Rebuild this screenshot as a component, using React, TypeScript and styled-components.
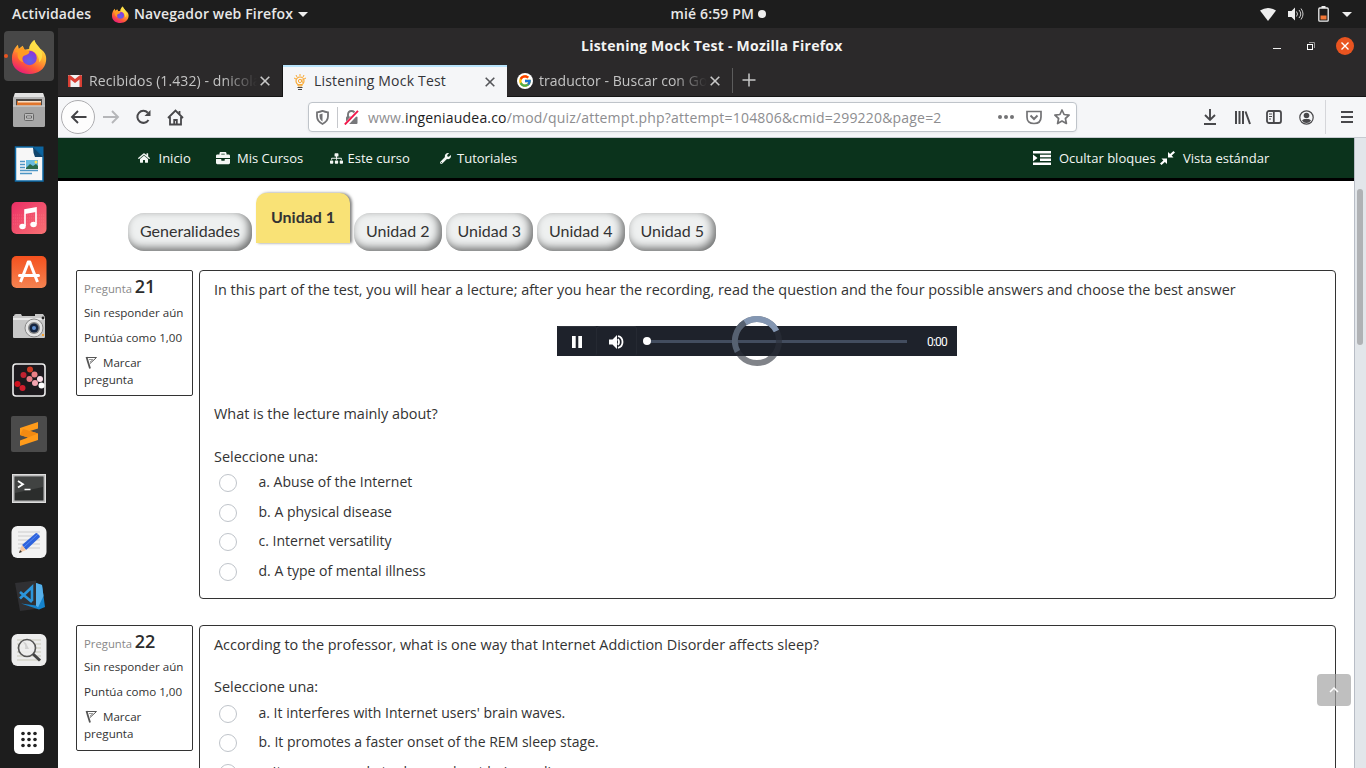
import React from "react";
import styled, { createGlobalStyle } from "styled-components";
import { FaHome, FaBriefcase, FaSitemap, FaWrench } from "react-icons/fa";
import { FcGoogle } from "react-icons/fc";

const GlobalStyle = createGlobalStyle`
  * { box-sizing: border-box; }
  body { margin: 0; overflow: hidden; background: #1d1d1d; }
  svg { display: block; flex: none; }
`;

const ui = `"Open Sans", "Noto Sans", sans-serif`;

const Desktop = styled.div`
  width: 1366px;
  height: 768px;
  display: flex;
  flex-direction: column;
  overflow: hidden;
  background: #1d1d1d;
  font-family: ${ui};
`;

const Label = styled.span<{ $w?: number; $ls?: number; $bold?: number; $size?: number; $color?: string; $ml?: number; $up?: number }>`
  display: block;
  flex: none;
  width: ${(p) => (p.$w ? p.$w + "px" : "auto")};
  letter-spacing: ${(p) => p.$ls ?? 0}px;
  font-weight: ${(p) => p.$bold ?? 400};
  font-size: ${(p) => p.$size ?? 14}px;
  color: ${(p) => p.$color ?? "inherit"};
  margin-left: ${(p) => p.$ml ?? 0}px;
  padding-bottom: ${(p) => p.$up ?? 0}px;
  white-space: nowrap;
`;

/* ---------- system bar ---------- */
const SystemBar = styled.header`
  height: 28px;
  flex: none;
  display: grid;
  grid-template-columns: 1fr auto 1fr;
  align-items: center;
  padding: 0 14px 0 12px;
  color: #e8e8e8;
  line-height: 26px;
`;
const BarSide = styled.div<{ $end?: boolean }>`
  display: flex;
  align-items: center;
  height: 26px;
  justify-content: ${(p) => (p.$end ? "flex-end" : "flex-start")};
`;
const Clock = styled.div`
  display: flex;
  align-items: center;
  height: 26px;
  padding-left: 72px;
`;
const Dot = styled.i`
  width: 8px;
  height: 8px;
  margin-left: 3px;
  border-radius: 50%;
  background: #eee;
`;
const Spacer = styled.div<{ $w?: number }>`
  width: ${(p) => (p.$w ? p.$w + "px" : "auto")};
  flex: ${(p) => (p.$w ? "none" : "1")};
`;

/* ---------- dock ---------- */
const Workspace = styled.div`
  flex: 1;
  min-height: 0;
  display: flex;
`;
const Dock = styled.aside`
  width: 58px;
  flex: none;
  display: flex;
  flex-direction: column;
  padding: 1px 0 14px;
`;
const DockSlot = styled.div`
  height: 54px;
  width: 58px;
  display: flex;
  align-items: center;
  justify-content: center;
`;
const ActiveTile = styled.div`
  width: 50px;
  height: 50px;
  border-radius: 4px;
  background: #474747;
  display: flex;
  align-items: center;
  justify-content: center;
`;
const RunDot = styled.i`
  position: absolute;
  left: 4px;
  top: 54px;
  width: 4px;
  height: 4px;
  border-radius: 50%;
  background: #e95420;
`;
const DockBottom = styled.div`
  margin-top: auto;
  display: flex;
  justify-content: center;
`;

/* ---------- browser ---------- */
const Browser = styled.main`
  flex: 1;
  min-width: 0;
  display: flex;
  flex-direction: column;
  background: #2b292a;
`;
const TitleBar = styled.div`
  height: 36px;
  flex: none;
  display: flex;
  align-items: center;
  padding: 0 12px 0 523px;
  color: #f3f3f3;
`;
const TabStrip = styled.div`
  height: 33px;
  flex: none;
  display: flex;
  padding-top: 1px;
  border-bottom: 1px solid #151515;
  color: #c9c9c9;
`;
const Tab = styled.div<{ $active?: boolean; $w: number; $pad: number }>`
  width: ${(p) => p.$w}px;
  height: ${(p) => (p.$active ? 32 : 31)}px;
  padding: 0 12px 1px ${(p) => p.$pad}px;
  display: flex;
  align-items: center;
  flex: none;
  color: ${(p) => (p.$active ? "#333438" : "#c4c4c4")};
  background: ${(p) => (p.$active ? "#f5f6f8" : "transparent")};
  border-top: 2px solid ${(p) => (p.$active ? "#b8e4fc" : "transparent")};
`;
const Fade = styled.div<{ $w: number; $ml: number }>`
  width: ${(p) => p.$w}px;
  margin-left: ${(p) => p.$ml}px;
  overflow: hidden;
  flex: none;
  mask-image: linear-gradient(to right, #000 calc(100% - 34px), transparent 100%);
`;
const Toolbar = styled.div`
  height: 41px;
  flex: none;
  display: flex;
  align-items: center;
  background: #f5f6f8;
  border-bottom: 1px solid #c6cad0;
  padding-left: 3px;
`;
const BackButton = styled.div`
  width: 34px;
  height: 34px;
  border: 1px solid #adadb0;
  border-radius: 50%;
  background: #fdfdfd;
  display: flex;
  align-items: center;
  justify-content: center;
`;
const AddressBar = styled.div`
  width: 769px;
  height: 30px;
  margin-left: 124px;
  flex: none;
  display: flex;
  align-items: center;
  background: #fff;
  border: 1px solid #bfc4ca;
  border-radius: 4px;
  padding: 0 6px 0 5px;
  box-shadow: 0 1px 3px rgba(0, 0, 0, 0.06);
  color: #8d8d90;
  b { color: #1c1c1e; font-weight: 400; }
`;
const Rule = styled.i<{ $h: number; $c: string }>`
  width: 1px;
  height: ${(p) => p.$h}px;
  background: ${(p) => p.$c};
  flex: none;
`;

/* ---------- page ---------- */
const Viewport = styled.div`
  flex: 1;
  min-height: 0;
  display: flex;
`;
const Page = styled.div`
  flex: 1;
  min-width: 0;
  background: #fff;
  overflow: hidden;
`;
const Scrollbar = styled.div`
  width: 12px;
  flex: none;
  background: #e2e6ea;
  border-left: 1px solid #b8bdc6;
  padding: 51px 0 0 2px;
`;
const Thumb = styled.div`
  width: 6px;
  height: 156px;
  border-radius: 3px;
  background: #b0b2b5;
`;
const SiteNav = styled.nav`
  height: 43px;
  display: flex;
  align-items: center;
  padding: 0 85px 0 80px;
  background: #0b331c;
  border-bottom: 3px solid #000;
  color: #f4f7f4;
`;
const UnitTabs = styled.div`
  display: flex;
  align-items: flex-end;
  height: 70px;
  padding-left: 70px;
  gap: 4px;
  font-family: Lato, sans-serif;
`;
const UnitTab = styled.div<{ $w: number }>`
  width: ${(p) => p.$w}px;
  height: 38px;
  border-radius: 16px;
  background: #eef0f0;
  box-shadow: inset -3px -3px 8px rgba(0, 0, 0, 0.55);
  color: #333;
  font-size: 16px;
  line-height: 36px;
  text-align: center;
  white-space: nowrap;
`;
const CurrentUnit = styled.div`
  width: 94px;
  height: 50px;
  margin-bottom: 8px;
  border-radius: 10px 10px 0 0;
  background: #f9e276;
  box-shadow: 2px 0 3px rgba(0, 0, 0, 0.5);
  color: #333;
  font-size: 16px;
  font-weight: 700;
  line-height: 48px;
  text-align: center;
`;
const Questions = styled.div`
  display: flex;
  flex-direction: column;
  gap: 26px;
  padding: 19px 18px 0 18px;
  color: #333;
`;
const Question = styled.section`
  display: flex;
  align-items: flex-start;
  gap: 6px;
`;
const Info = styled.div`
  width: 117px;
  height: 126px;
  border: 1px solid #333;
  border-radius: 2px;
  padding: 4px 7px 0;
  font-size: 11.6px;
  line-height: 17px;
  white-space: nowrap;
`;
const InfoTitle = styled.div`
  height: 20.6px;
  line-height: 22px;
  color: #888;
  font-size: 11.3px;
  b { color: #2c2c2c; font-size: 18px; font-weight: 600; margin-left: -0.3px; }
`;
const InfoLine = styled.div`
  margin-top: 8px;
`;
const FlagLine = styled.div`
  display: flex;
  align-items: center;
  gap: 6px;
  margin-top: 8px;
`;
const Body = styled.div<{ $h: number }>`
  width: 1137px;
  height: ${(p) => p.$h}px;
  border: 1px solid #333;
  border-radius: 4px;
  padding: 9px 14px 0;
  font-size: 14.43px;
  line-height: 20px;
`;
const Prompt = styled.div<{ $mt?: number }>`
  margin-top: ${(p) => p.$mt ?? 0}px;
  white-space: nowrap;
`;
const Choices = styled.div<{ $pt: number }>`
  padding-top: ${(p) => p.$pt}px;
  font-size: 14.03px;
`;
const Choice = styled.label`
  display: flex;
  align-items: center;
  height: 29.6px;
  padding: 0 0 0 5px;
  gap: 21.5px;
  span { margin-top: -2px; }
`;
const Radio = styled.i`
  width: 18px;
  height: 18px;
  border: 1px solid #bfc4ca;
  border-radius: 50%;
  background: #fff;
`;
const Player = styled.div`
  position: relative;
  width: 400px;
  height: 30px;
  margin: 26px 0 0 343px;
  background: #1e222b;
  display: flex;
  align-items: center;
  color: #fff;
`;
const PlayerButton = styled.div`
  width: 40px;
  height: 30px;
  border-radius: 3px;
  border-top: 1px solid #30343c;
  border-right: 1px solid #252932;
  display: flex;
  align-items: center;
  justify-content: center;
`;
const Track = styled.div`
  width: 260px;
  height: 3px;
  margin-left: 10px;
  background: #434d5f;
  display: flex;
  align-items: center;
`;
const Knob = styled.i`
  width: 8px;
  height: 8px;
  margin-left: -4px;
  border-radius: 50%;
  background: #fff;
`;
const Elapsed = styled.span`
  margin: 1px 0 0 20px;
  font-family: Roboto, sans-serif;
  font-size: 12px;
  letter-spacing: -0.8px;
`;
const Loading = styled.svg`
  position: absolute;
  left: 175px;
  top: -10px;
`;
const TopButton = styled.button`
  position: absolute;
  left: 1317px;
  top: 674px;
  width: 34px;
  height: 32px;
  padding: 0;
  border: 0;
  border-radius: 4px;
  background: rgba(160, 160, 160, 0.68);
  display: flex;
  align-items: center;
  justify-content: center;
`;

/* ---------- drawings ---------- */
const Firefox = ({ size, id }: { size: number; id: string }) => (
  <svg width={size} height={size} viewBox="0 0 36 36">
    <defs>
      <linearGradient id={id + "a"} x1=".8" y1="0" x2=".25" y2="1">
        <stop offset="0" stopColor="#fff44f" /><stop offset=".4" stopColor="#ffb02e" />
        <stop offset=".7" stopColor="#ff5b36" /><stop offset="1" stopColor="#e6157f" />
      </linearGradient>
      <radialGradient id={id + "b"} cx=".5" cy=".7" r=".7">
        <stop offset="0" stopColor="#5b67e8" /><stop offset="1" stopColor="#9331d8" />
      </radialGradient>
    </defs>
    <path d="M1 14C2 10 4 8 6 6l1 4 4-3 2 4 5-1c0-4 3-7 5-9 1 4 4 6 6 9 5 3 7 8 6 13-1 8-8 13-17 13C8 36 0 30 0 21c0-3 0-5 1-7z" fill={`url(#${id}a)`} />
    <circle cx="18" cy="19.500" r="7.500" fill={`url(#${id}b)`} />
    <path d="M3 13l3-3 1 1 4-3 2 3 5 1.500c0 3-3 3.500-5 4.500-3 1-3 5-1 7-5-1-7-5-6-10z" fill="#ff9a22" />
    <path d="M18 11c-1-4 2-8 5-10 1 5 5 6 7 11 2 4 1 9-2 12 0-6-3-11-10-13z" fill="#ffe24a" opacity=".8" />
  </svg>
);
const Files = () => (
  <svg width="34" height="36" viewBox="0 0 34 36">
    <path d="M3 1h28l2 5v27q0 2-2 2H3q-2 0-2-2V6z" fill="#b6b6b6" />
    <path d="M3 1h28l1 4H2z" fill="#e2e2e2" />
    <path d="M4 7h26v8H4z" fill="#4c4743" />
    <path d="M5 9h24v6H5z" fill="#e0752c" /><path d="M6 9h23v1.500H6z" fill="#f6dfc6" />
    <path d="M1 13.500h32V33q0 2-2 2H3q-2 0-2-2z" fill="#a6a6a6" /><path d="M1 13.500h32v1H1z" fill="#dadada" />
    <rect x="12.500" y="21.500" width="9" height="7" rx="1" fill="#bbb" stroke="#666" /><path d="M14.500 24h5v2h-5z" fill="#eee" stroke="#666" />
  </svg>
);
const Writer = () => (
  <svg width="30" height="36" viewBox="0 0 30 36">
    <path d="M1.500 1H19l10 10v24H1.500z" fill="#f7f7f7" stroke="#0d6aa7" strokeWidth="1.500" />
    <path d="M19 .5h10.500V11z" fill="#0c65a0" /><path d="M19 1l10 10H21q-2-4-2-10z" fill="#12456c" />
    <path d="M6 15.500h5M6 18.500h5M6 21.500h5M6 24.500h18M6 27.500h12" stroke="#4d96c5" strokeWidth="1.500" />
    <path d="M12 14h12v9H12z" fill="#69bce0" /><path d="M12 22l4-4 3 2 3-2 2 2v3H12z" fill="#2a6b4a" /><circle cx="22" cy="16" r="1.500" fill="#ffe55a" />
  </svg>
);
const Music = () => (
  <svg width="36" height="34" viewBox="0 0 36 34">
    <defs><linearGradient id="mu" x1="0" y1="0" x2="1" y2="1"><stop stopColor="#ec2e66" /><stop offset="1" stopColor="#f77273" /></linearGradient></defs>
    <rect x=".5" y="1" width="35" height="32" rx="5" fill="url(#mu)" />
    <path d="M2 14h32M2 17h32M2 20h32M2 23h32" stroke="#ff8c94" strokeWidth=".6" strokeDasharray="1 1" opacity=".6" />
    <path d="M14 25V9l11-2v16" fill="none" stroke="#fff" strokeWidth="1.600" /><path d="M14 9l11-2v4l-11 2z" fill="#fff" />
    <ellipse cx="11.500" cy="25.500" rx="3.200" ry="2.700" fill="#fff" /><ellipse cx="22.500" cy="23.500" rx="3.200" ry="2.700" fill="#fff" />
  </svg>
);
const Software = () => (
  <svg width="36" height="34" viewBox="0 0 36 34">
    <defs><linearGradient id="sw" x1="0" y1="0" x2="0" y2="1"><stop stopColor="#f4511e" /><stop offset="1" stopColor="#f58351" /></linearGradient></defs>
    <rect x=".5" y="1" width="35" height="32" rx="5" fill="url(#sw)" />
    <path d="M17.500 6.500L9.500 27M18.500 6.500L26.500 27" stroke="#fff" strokeWidth="3" /><path d="M8.500 20.500h19" stroke="#fff" strokeWidth="3" strokeLinecap="round" />
    <path d="M15.500 7.500l1-2h3l1 2" fill="#fff" />
  </svg>
);
const Camera = () => (
  <svg width="34" height="26" viewBox="0 0 34 26">
    <path d="M2 3q0-2 2-2h5l1 2h13V1h8l2 3v20q0 1-1 1H2q-1 0-1-1V3z" fill="#c7c7c7" /><path d="M1 5h32v2H1z" fill="#e9e9e9" />
    <circle cx="22" cy="15" r="9" fill="#e5e5e5" stroke="#888" /><circle cx="22" cy="15" r="6" fill="#888" /><circle cx="22" cy="15" r="4.500" fill="#16253f" /><circle cx="22" cy="15" r="2" fill="#5f8fd0" />
    <circle cx="31" cy="5" r="1.400" fill="#222" /><path d="M30 21h2v2h-2z" fill="#f5a333" />
  </svg>
);
const Dots = () => (
  <svg width="34" height="34" viewBox="0 0 34 34">
    <rect x="1" y="1" width="32" height="32" rx="3" fill="#1c191d" stroke="#eee" strokeWidth="1.600" />
    <g><circle cx="18" cy="6.500" r="3" fill="#cf3a23" /><circle cx="11.500" cy="12" r="3" fill="#c22231" /><circle cx="5.500" cy="21" r="3" fill="#d0121e" /><circle cx="10.500" cy="25" r="3" fill="#d21d2c" />
      <circle cx="22.500" cy="11.500" r="3" fill="#ec8087" /><circle cx="17.500" cy="16" r="3" fill="#e77c84" /><circle cx="23" cy="20" r="3" fill="#f2a3b0" /><circle cx="28" cy="16" r="3" fill="#f9dde5" /><circle cx="29.500" cy="22.500" r="3" fill="#fff" /></g>
  </svg>
);
const Sublime = () => (
  <svg width="36" height="36" viewBox="0 0 36 36">
    <rect width="36" height="36" rx="2" fill="#4b4b4b" />
    <path d="M27 6L9 12v7l8 2.500-8 3V30l18-6v-6.500l-8-2.500 8-2.500z" fill="#ff9b1a" /><path d="M9 19l8 2.500 10-4-8-2.500-7-2z" fill="#f28a12" />
  </svg>
);
const Terminal = () => (
  <svg width="34" height="29" viewBox="0 0 34 29">
    <rect x=".5" y=".5" width="33" height="28" fill="#bbb" stroke="#ddd" /><rect x="2.500" y="2.500" width="29" height="24" fill="#2b2d2c" /><path d="M3 3h28v10L3 19z" fill="#414342" />
    <path d="M6 7l5 3.200L6 13.500" fill="none" stroke="#fff" strokeWidth="1.800" /><path d="M12.500 15.500h6" stroke="#fff" strokeWidth="1.500" />
  </svg>
);
const Editor = () => (
  <svg width="36" height="34" viewBox="0 0 36 34">
    <rect x=".5" y="1" width="35" height="32" rx="6" fill="#f2f2f2" /><path d="M7 7h22M7 11h22M7 15h22M7 19h22M7 23h22" stroke="#ccc" />
    <path d="M11 20L25 8q2 0 4 4L15 25z" fill="#2d63dc" /><path d="M13 22L27 9" stroke="#5a8af3" /><path d="M8 28l3-8 4 5z" fill="#f3c6a0" /><path d="M8 28l1-3 2 2z" fill="#333" />
  </svg>
);
const VsCode = () => (
  <svg width="34" height="34" viewBox="0 0 34 34">
    <path d="M3 4L24 1.500l3 28L8 32z" fill="#303033" />
    <path d="M8 13l12 10M8 19.500L20 8v14" fill="none" stroke="#2b95da" strokeWidth="2.600" />
    <path d="M9 24.500l15 2V4l6 2 3 22-6 2.500z" fill="#1583cc" /><path d="M24 4l6 2 1.500 11L26 28.500l-2-2z" fill="#56b0ea" />
  </svg>
);
const Viewer = () => (
  <svg width="36" height="34" viewBox="0 0 36 34">
    <rect x=".5" y="1" width="35" height="32" rx="6" fill="#ececec" /><path d="M6 7h24M6 11h24M6 15h24M6 19h24M6 23h24M6 27h24" stroke="#c9c9b8" />
    <circle cx="16" cy="15" r="8.500" fill="#eee" fillOpacity=".85" stroke="#555" strokeWidth="1.600" /><path d="M11 8q4 3 3 8h4l-3-6" fill="#d0d0d0" /><path d="M22 21l7 6.500" stroke="#444" strokeWidth="3" />
  </svg>
);
const Apps = () => (
  <svg width="30" height="29" viewBox="0 0 30 29">
    <rect width="30" height="29" rx="5" fill="#fff" />
    {[8.5, 14.5, 20.5].map((y) => [9, 15, 21].map((x) => <circle key={x + "-" + y} cx={x} cy={y} r="1.800" fill="#222" />))}
  </svg>
);
const Cross = ({ size = 10, color = "#c8c8c8", w = 1.6 }: { size?: number; color?: string; w?: number }) => (
  <svg width={size} height={size} viewBox="0 0 10 10"><path d="M.7.7l8.600 8.600M9.300.7L.7 9.300" stroke={color} strokeWidth={w} /></svg>
);
const Gmail = () => (
  <svg width="14" height="12" viewBox="0 0 14 12"><rect width="14" height="12" rx="1" fill="#f1f1f1" /><path d="M0 1v11h2.500V4.500L7 8l4.500-3.500V12H14V1q-1-1.500-2.500-.5L7 4 2.500.5Q1-.5 0 1z" fill="#d93f34" /></svg>
);
const Bulb = () => (
  <svg width="12" height="16" viewBox="0 0 12 16" fill="none" stroke="#f8a935">
    <path d="M6 0v2M2 1l1 2M10 1L9 3M0 4l2 1M12 4l-2 1" /><circle cx="6" cy="7" r="4" strokeWidth="1.200" /><circle cx="6" cy="7" r="1.600" /><path d="M8 5v3l1.500.5M4 10.500h4v1.500H4z" /><path d="M3.500 13.500h5M4 15.500h4" stroke="#444" />
  </svg>
);
const Caret = () => <svg width="10" height="5" viewBox="0 0 10 5"><path d="M0 0h10L5 5z" fill="#eee" /></svg>;
const Flag = () => (
  <svg width="13" height="13" viewBox="0 0 13 13" fill="none" stroke="#555"><path d="M2.500 1l3.500 11.500" strokeWidth="1.800" /><path d="M2.500 1.500h10L6 7.500" /><path d="M5 3.500h4L6 6" stroke="#999" /></svg>
);
const Shrink = () => (
  <svg width="15" height="14" viewBox="0 0 15 14" fill="#fff"><path d="M8 1v5.500h5.500L11.600 4.600 15 1.500 13.500 0l-3.400 3zM7 13V7.500H1.500l1.900 1.900L0 12.500 1.500 14l3.400-3z" /></svg>
);

const questions = [
  {
    n: 21,
    h: 328.6,
    choicesTop: 1.4,
    intro: "In this part of the test, you will hear a lecture; after you hear the recording, read the question and the four possible answers and choose the best answer",
    audio: true,
    prompt: "What is the lecture mainly about?",
    options: ["a. Abuse of the Internet", "b. A physical disease", "c. Internet versatility", "d. A type of mental illness"],
  },
  {
    n: 22,
    h: 300,
    choicesTop: 2.5,
    intro: "According to the professor, what is one way that Internet Addiction Disorder affects sleep?",
    audio: false,
    prompt: "",
    options: ["a. It interferes with Internet users' brain waves.", "b. It promotes a faster onset of the REM sleep stage.", "c. It causes people to dream about being online."],
  },
];

const AudioPlayer = () => (
  <Player>
    <PlayerButton><svg width="10" height="12" viewBox="0 0 10 12"><path d="M0 0h3.700v12H0zM6.300 0H10v12H6.300z" fill="#fff" /></svg></PlayerButton>
    <PlayerButton>
      <svg width="15" height="14" viewBox="0 0 15 14"><path d="M0 4.500h3.500L8 0v14L3.500 9.500H0z" fill="#fff" /><path d="M9 4q2 3 0 6M9 1.200q4.500 1 4.500 5.800T9 12.800" fill="none" stroke="#fff" strokeWidth="1.800" /></svg>
    </PlayerButton>
    <Track><Knob /></Track>
    <Elapsed>0:00</Elapsed>
    <Loading width="50" height="50" viewBox="0 0 50 50" fill="none" strokeWidth="6">
      <circle cx="25" cy="25" r="22" stroke="#2b303a" strokeOpacity=".6" />
      <path d="M13 6.600A22 22 0 0 1 44.500 15" stroke="#8396b2" />
      <path d="M5.500 35.500A22 22 0 0 1 13 6.600" stroke="#566171" />
    </Loading>
  </Player>
);

export default function App() {
  return (
    <Desktop>
      <GlobalStyle />
      <SystemBar>
        <BarSide>
          <Label $w={80} $bold={600} $ls={0.15} $up={1}>Actividades</Label>
          <Spacer $w={20} />
          <Firefox size={17} id="fs" />
          <Label $ml={5} $w={160} $bold={600} $ls={0.14} $up={1}>Navegador web Firefox</Label>
          <Spacer $w={4} />
          <Caret />
        </BarSide>
        <Clock><Label $w={84} $bold={600} $ls={0.15} $up={1}>mié  6:59 PM</Label><Dot /></Clock>
        <BarSide $end>
          <svg width="16" height="13" viewBox="0 0 16 13"><path d="M0 2.500q8-5 16 0L8 13z" fill="#eee" /></svg>
          <Spacer $w={12} />
          <svg width="16" height="14" viewBox="0 0 16 14"><path d="M0 4h3.500L7 .5v13L3.500 10H0z" fill="#eee" /><path d="M8.500 4.500q2 2.500 0 5M11 3q3.500 4 0 8M13 1.500q4 5.500 0 11" fill="none" stroke="#ccc" /></svg>
          <Spacer $w={14} />
          <svg width="11" height="16" viewBox="0 0 11 16"><path d="M3.500 0h4v2h-4z" fill="#eee" /><rect x=".8" y="2" width="9.400" height="13.200" rx="1" fill="none" stroke="#eee" strokeWidth="1.300" /><path d="M2.500 9.500h6v4h-6z" fill="#f37736" /></svg>
          <Spacer $w={13} />
          <Caret />
        </BarSide>
      </SystemBar>
      <Workspace>
        <Dock>
          <DockSlot><ActiveTile><Firefox size={35} id="fl" /></ActiveTile></DockSlot>
          {[Files, Writer, Music, Software, Camera, Dots, Sublime, Terminal, Editor, VsCode, Viewer].map((Icon, i) => (
            <DockSlot key={i}><Icon /></DockSlot>
          ))}
          <DockBottom><Apps /></DockBottom>
        </Dock>
        <RunDot />
        <Browser>
          <TitleBar>
            <Label $w={262} $bold={700} $ls={0.24} $up={2}>Listening Mock Test - Mozilla Firefox</Label>
            <Spacer />
            <svg width="8" height="10" viewBox="0 0 8 10"><path d="M0 7.500h8" stroke="#eee" /></svg>
            <Spacer $w={26} />
            <svg width="8" height="8" viewBox="0 0 8 8" fill="none"><path d="M2 .5h5.500V6" stroke="#999" /><rect x=".5" y="2.500" width="5" height="5" stroke="#fff" /></svg>
            <Spacer $w={21} />
            <svg width="18" height="18" viewBox="0 0 18 18"><circle cx="9" cy="9" r="9" fill="#e95420" /><path d="M5.500 5.500l7 7m0-7l-7 7" stroke="#fff" strokeWidth="1.400" /></svg>
          </TitleBar>
          <TabStrip>
            <Tab $w={224} $pad={10}><Gmail /><Fade $w={168} $ml={7}><Label $ls={0.1} $up={2}>Recibidos (1.432) - dnicolas</Label></Fade><Spacer /><Cross /></Tab>
            <Rule $h={31} $c="#151515" />
            <Tab $active $w={224} $pad={11}><Bulb /><Label $ml={8} $ls={0.2} $up={2}>Listening Mock Test</Label><Spacer /><Cross color="#55565a" /></Tab>
            <Tab $w={225} $pad={10}>
              <svg width="16" height="16" viewBox="0 0 16 16"><circle cx="8" cy="8" r="8" fill="#fff" /><FcGoogle x="1" y="1" size={14} /></svg>
              <Fade $w={168} $ml={6}><Label $ls={0.04} $up={2}>traductor - Buscar con Google</Label></Fade><Spacer /><Cross />
            </Tab>
            <svg width="26" height="30" viewBox="0 0 26 30"><path d="M.5 3v25" stroke="#5c5c5c" /><path d="M17 8.500v13M10.500 15h13" stroke="#c8c8c8" strokeWidth="1.500" /></svg>
          </TabStrip>
          <Toolbar>
            <BackButton><svg width="17" height="14" viewBox="0 0 17 14" fill="none" stroke="#434346" strokeWidth="1.900"><path d="M16.500 7H2M8 1L2 7l6 6" /></svg></BackButton>
            <Spacer $w={8} />
            <svg width="17" height="14" viewBox="0 0 17 14" fill="none" stroke="#b5b6b9" strokeWidth="1.900"><path d="M0 7h14.500M9 1l6 6-6 6" /></svg>
            <Spacer $w={15} />
            <svg width="16" height="16" viewBox="0 0 16 16" fill="none" stroke="#48484b" strokeWidth="2"><path d="M12.800 3.800A6 6 0 1 0 13.500 11" /><path d="M15.500 1v6H9.500z" fill="#48484b" stroke="none" /></svg>
            <Spacer $w={16} />
            <svg width="17" height="17" viewBox="0 0 17 17" fill="none" stroke="#48484b" strokeWidth="1.800"><path d="M1 9l7.500-7.500L16 9M3 8v7.500h11V8" /><path d="M7.200 15v-4h2.600v4" /><path d="M12.500 5V2" /></svg>
            <AddressBar>
              <Spacer $w={2} />
              <svg width="13" height="15" viewBox="0 0 13 15"><path d="M1 2.300Q4 2 6.500.9 9 2 12 2.300v4q0 5-5.500 7.700Q1 11.300 1 6.300z" fill="none" stroke="#737375" strokeWidth="1.800" /><path d="M6.500 3.500v8Q3.500 9.500 3.500 6V4.500z" fill="#737375" /></svg>
              <Spacer $w={8} /><Rule $h={21} $c="#c6c8cc" /><Spacer $w={6} />
              <svg width="15" height="15" viewBox="0 0 15 15"><path d="M4 7V4.500q0-3.500 3.500-3.500T11 4.500V7" fill="none" stroke="#77777a" strokeWidth="1.900" /><rect x="2" y="6.500" width="11.500" height="7.500" rx="1" fill="#77777a" /><path d="M1.500 15L14.500 1" stroke="#fff" strokeWidth="4" /><path d="M.8 14.500L14 .8" stroke="#f2184b" strokeWidth="1.900" /></svg>
              <Label $ml={9} $w={620} $ls={0.19}>www.<b>ingeniaudea.co</b>/mod/quiz/attempt.php?attempt=104806&amp;cmid=299220&amp;page=2</Label>
              <Spacer />
              <svg width="16" height="4" viewBox="0 0 16 4" fill="#737375"><circle cx="2" cy="2" r="2" /><circle cx="8" cy="2" r="2" /><circle cx="14" cy="2" r="2" /></svg>
              <Spacer $w={12} />
              <svg width="16" height="15" viewBox="0 0 16 15" fill="none" stroke="#737375" strokeWidth="1.700"><path d="M1 1.500h14V7q0 6.500-7 6.500T1 7z" /><path d="M4.500 5.500L8 9l3.500-3.500" strokeWidth="2" /></svg>
              <Spacer $w={12} />
              <svg width="16" height="16" viewBox="0 0 16 16" fill="none" stroke="#737375" strokeWidth="1.700" strokeLinejoin="round"><path d="M8 1l2.100 4.500 5 .6-3.700 3.400 1 5L8 12l-4.400 2.500 1-5L.9 6.100l5-.6z" /></svg>
            </AddressBar>
            <Spacer $w={127} />
            <svg width="12" height="16" viewBox="0 0 12 16" fill="none" stroke="#48484b" strokeWidth="1.900"><path d="M6 0v11M1 6l5 5 5-5M0 15h12" /></svg>
            <Spacer $w={19} />
            <svg width="16" height="15" viewBox="0 0 16 15" fill="none" stroke="#48484b" strokeWidth="2"><path d="M1 1v13M4.500 1v13M8 1v13M10.500 1.500l4.500 12.500" /></svg>
            <Spacer $w={15} />
            <svg width="16" height="14" viewBox="0 0 16 14" fill="none" stroke="#48484b" strokeWidth="1.800"><rect x="1" y="1" width="14" height="12" rx="2" /><path d="M7.800 1v12" /><path d="M3 4h3M3 6.500h3M3 9h2" strokeWidth="1" /></svg>
            <Spacer $w={17} />
            <svg width="15" height="15" viewBox="0 0 15 15"><circle cx="7.500" cy="7.500" r="6.700" fill="none" stroke="#48484b" strokeWidth="1.200" /><circle cx="7.500" cy="5.500" r="2.800" fill="#48484b" /><path d="M3 10.500q1-1.500 2.500-1.500h4q1.500 0 2.500 1.500-1.500 2.500-4.500 2.500T3 10.500z" fill="#48484b" /></svg>
            <Spacer $w={11} /><Rule $h={34} $c="#d5d6da" /><Spacer $w={15} />
            <svg width="12" height="12" viewBox="0 0 12 12" stroke="#48484b" strokeWidth="1.800"><path d="M0 1h12M0 6h12M0 11h12" /></svg>
          </Toolbar>
          <Viewport>
            <Page>
              <SiteNav>
                <FaHome size={12} /><Label $ml={8.500} $w={57.500} $size={13}>Inicio</Label>
                <FaBriefcase size={14} /><Label $ml={7} $w={92.500} $size={13}>Mis Cursos</Label>
                <FaSitemap size={13} /><Label $ml={5} $w={92.500} $size={13}>Este curso</Label>
                <FaWrench size={11} /><Label $ml={6} $size={13}>Tutoriales</Label>
                <Spacer />
                <svg width="18" height="14" viewBox="0 0 18 14" fill="#fff"><path d="M0 0h18v2.500H0zM7 3.800h11v2.500H7zM7 7.600h11v2.500H7zM0 11.500h18V14H0zM0 3.500L4.500 7 0 10.500z" /></svg>
                <Label $ml={8} $w={101} $size={13}>Ocultar bloques</Label>
                <Shrink />
                <Label $ml={8} $w={86} $size={13}>Vista estándar</Label>
              </SiteNav>
              <UnitTabs>
                <UnitTab $w={124}>Generalidades</UnitTab>
                <CurrentUnit>Unidad 1</CurrentUnit>
                <UnitTab $w={87.5}>Unidad 2</UnitTab>
                <UnitTab $w={87.5}>Unidad 3</UnitTab>
                <UnitTab $w={87.5}>Unidad 4</UnitTab>
                <UnitTab $w={87.5}>Unidad 5</UnitTab>
              </UnitTabs>
              <Questions>
                {questions.map((q) => (
                  <Question key={q.n}>
                    <Info>
                      <InfoTitle>Pregunta <b>{q.n}</b></InfoTitle>
                      <InfoLine>Sin responder aún</InfoLine>
                      <InfoLine>Puntúa como 1,00</InfoLine>
                      <FlagLine><Flag />Marcar</FlagLine>
                      <div>pregunta</div>
                    </Info>
                    <Body $h={q.h}>
                      <Prompt>{q.intro}</Prompt>
                      {q.audio && <AudioPlayer />}
                      {q.prompt && <Prompt $mt={48}>{q.prompt}</Prompt>}
                      <Prompt $mt={q.prompt ? 23 : 22}>Seleccione una:</Prompt>
                      <Choices $pt={q.choicesTop}>
                        {q.options.map((o) => <Choice key={o}><Radio /><span>{o}</span></Choice>)}
                      </Choices>
                    </Body>
                  </Question>
                ))}
              </Questions>
            </Page>
            <Scrollbar><Thumb /></Scrollbar>
          </Viewport>
        </Browser>
      </Workspace>
      <TopButton aria-label="Subir"><svg width="10" height="6" viewBox="0 0 10 6" fill="none" stroke="#fff" strokeWidth="1.500"><path d="M1 5l4-4 4 4" /></svg></TopButton>
    </Desktop>
  );
}
